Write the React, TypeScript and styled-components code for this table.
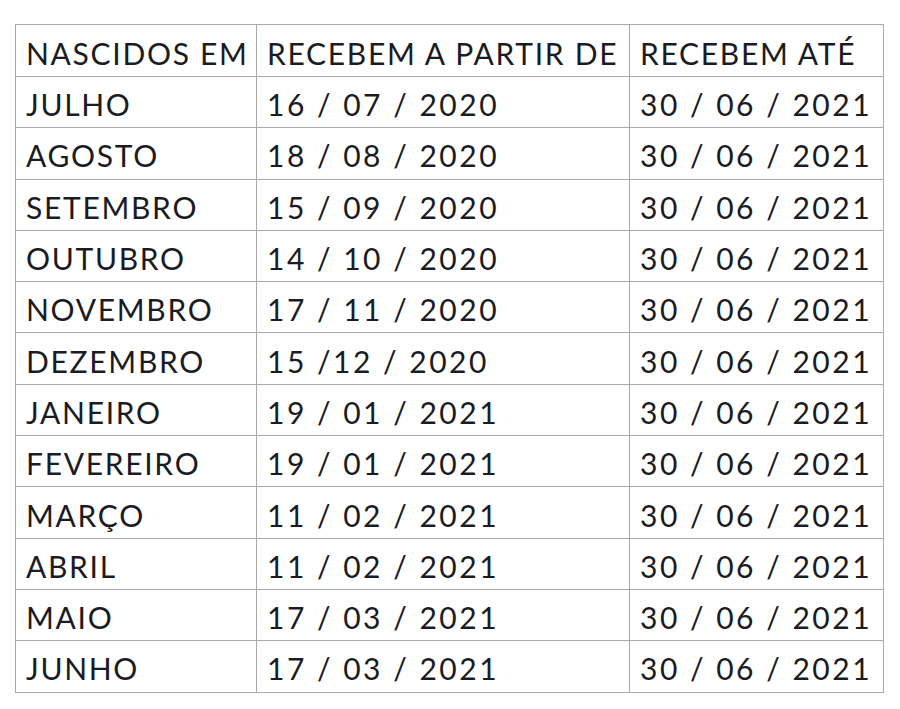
import React from "react";
import styled, { createGlobalStyle } from "styled-components";

const Global = createGlobalStyle`
  html, body { margin: 0; padding: 0; background: #ffffff; }
  body { font-family: Lato, "Open Sans", sans-serif; }
`;

const Page = styled.div`
  padding: 24px 0 0 15px;
`;

const Table = styled.table`
  border-collapse: collapse;
  table-layout: fixed;
  width: 868px;
  border: 1px solid #a2a2a2;
`;

const Col = styled.col<{ $w: number }>`
  width: ${(p) => p.$w}px;
`;

const Row = styled.tr<{ $h: number }>`
  height: ${(p) => p.$h}px;
`;

const Cell = styled.td<{ $num?: boolean }>`
  border: 1px solid #a8a8a8;
  padding: 4px 0 0 ${(p) => (p.$num ? 10 : 10)}px;
  font-family: Lato, "Open Sans", sans-serif;
  font-size: 30px;
  letter-spacing: ${(p) => (p.$num ? 2.5 : 1.7)}px;
  color: #1b1b24;
  white-space: nowrap;
  overflow: hidden;
  vertical-align: middle;
  line-height: 1;
`;

const rows: [string, string, string][] = [
  ["JULHO", "16 / 07 / 2020", "30 / 06 / 2021"],
  ["AGOSTO", "18 / 08 / 2020", "30 / 06 / 2021"],
  ["SETEMBRO", "15 / 09 / 2020", "30 / 06 / 2021"],
  ["OUTUBRO", "14 / 10 / 2020", "30 / 06 / 2021"],
  ["NOVEMBRO", "17 / 11 / 2020", "30 / 06 / 2021"],
  ["DEZEMBRO", "15 /12 / 2020", "30 / 06 / 2021"],
  ["JANEIRO", "19 / 01 / 2021", "30 / 06 / 2021"],
  ["FEVEREIRO", "19 / 01 / 2021", "30 / 06 / 2021"],
  ["MARÇO", "11 / 02 / 2021", "30 / 06 / 2021"],
  ["ABRIL", "11 / 02 / 2021", "30 / 06 / 2021"],
  ["MAIO", "17 / 03 / 2021", "30 / 06 / 2021"],
  ["JUNHO", "17 / 03 / 2021", "30 / 06 / 2021"],
];

export default function App() {
  return (
    <>
      <Global />
      <Page>
        <Table>
          <colgroup>
            <Col $w={241} />
            <Col $w={373} />
            <Col $w={254} />
          </colgroup>
          <tbody>
            <Row $h={52}>
              <Cell>NASCIDOS EM</Cell>
              <Cell>RECEBEM A PARTIR DE</Cell>
              <Cell>RECEBEM ATÉ</Cell>
            </Row>
            {rows.map((r) => (
              <Row $h={51.3} key={r[0]}>
                <Cell>{r[0]}</Cell>
                <Cell $num>{r[1]}</Cell>
                <Cell $num>{r[2]}</Cell>
              </Row>
            ))}
          </tbody>
        </Table>
      </Page>
    </>
  );
}
